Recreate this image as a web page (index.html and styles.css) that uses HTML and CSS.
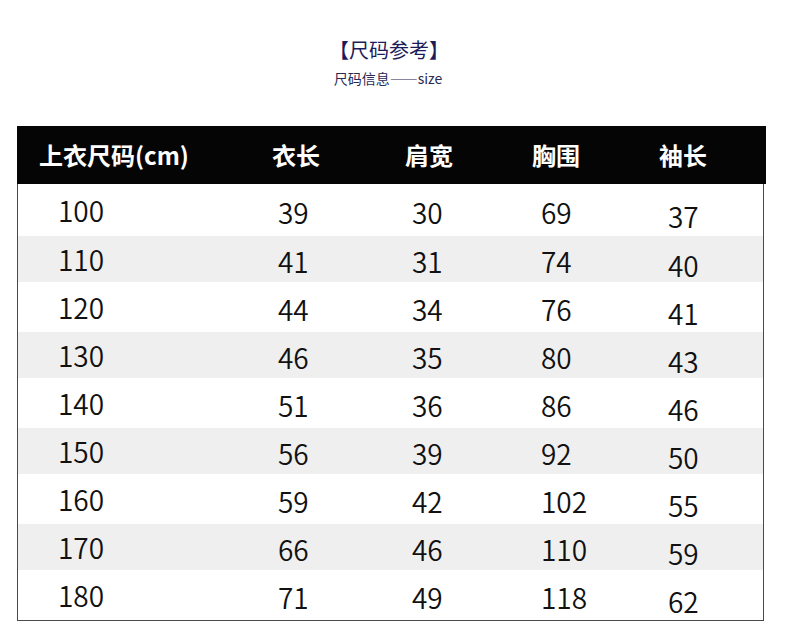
FILE: index.html
```html
<!DOCTYPE html>
<html lang="zh">
<head>
<meta charset="utf-8">
<title>尺码参考</title>
<link rel="stylesheet" href="styles.css">
</head>
<body>
<div class="page">
  <h1 class="title">【尺码参考】</h1>
  <p class="subtitle">尺码信息——size</p>
  <div class="table">
    <div class="thead">
      <div class="th first">上衣尺码(cm)</div>
      <div class="th">衣长</div>
      <div class="th">肩宽</div>
      <div class="th">胸围</div>
      <div class="th">袖长</div>
    </div>
    <div class="tbody">
      <div class="row r1"><span>100</span><span>39</span><span>30</span><span>69</span><span class="c5">37</span></div>
      <div class="row alt"><span>110</span><span>41</span><span>31</span><span>74</span><span class="c5">40</span></div>
      <div class="row"><span>120</span><span>44</span><span>34</span><span>76</span><span class="c5">41</span></div>
      <div class="row alt"><span>130</span><span>46</span><span>35</span><span>80</span><span class="c5">43</span></div>
      <div class="row"><span>140</span><span>51</span><span>36</span><span>86</span><span class="c5">46</span></div>
      <div class="row alt"><span>150</span><span>56</span><span>39</span><span>92</span><span class="c5">50</span></div>
      <div class="row"><span>160</span><span>59</span><span>42</span><span>102</span><span class="c5">55</span></div>
      <div class="row alt"><span>170</span><span>66</span><span>46</span><span>110</span><span class="c5">59</span></div>
      <div class="row"><span>180</span><span>71</span><span>49</span><span>118</span><span class="c5">62</span></div>
    </div>
  </div>
</div>
</body>
</html>
```
FILE: styles.css
```css
* { box-sizing: border-box; }
body {
  margin: 0;
  background: #fff;
  font-family: "Noto Sans CJK SC", "Noto Sans", sans-serif;
  color: #111;
}
.page {
  width: 790px;
  padding-top: 37px;
}
.title {
  margin: 0;
  width: 778px;
  font-size: 20px;
  line-height: 26px;
  font-weight: 400;
  text-align: center;
  color: #1c1c5a;
}
.subtitle {
  margin: 6px 0 0;
  width: 776px;
  font-size: 14px;
  line-height: 18px;
  text-align: center;
  color: #2a2a55;
}
.table {
  margin: 39px 0 0 17px;
  width: 749px;
}
.thead {
  display: grid;
  grid-template-columns: 223px 112px 154px 100px 154px 1fr;
  align-items: center;
  height: 58px;
  background: #050505;
  color: #fff;
}
.th {
  font-size: 24px;
  font-weight: 700;
  text-align: center;
  line-height: 30px;
}
.th.first {
  text-align: left;
  padding-left: 22px;
}
.tbody {
  width: 747px;
  border: 1px solid #4a4a4a;
  border-top: none;
}
.row {
  display: grid;
  grid-template-columns: 260px 134px 129px 127px 1fr;
  align-items: center;
  height: 50px;
  font-size: 28px;
  font-weight: 350;
  line-height: 34px;
  color: #111;
}
.row.r1 { height: 52px; }
.row.alt {
  height: 46px;
  background: #efefef;
}
.row span {
  padding-top: 4px;
}
.row span:first-child {
  padding-left: 40px;
  padding-top: 0;
}
.row .c5 {
  padding-top: 12px;
}
```
